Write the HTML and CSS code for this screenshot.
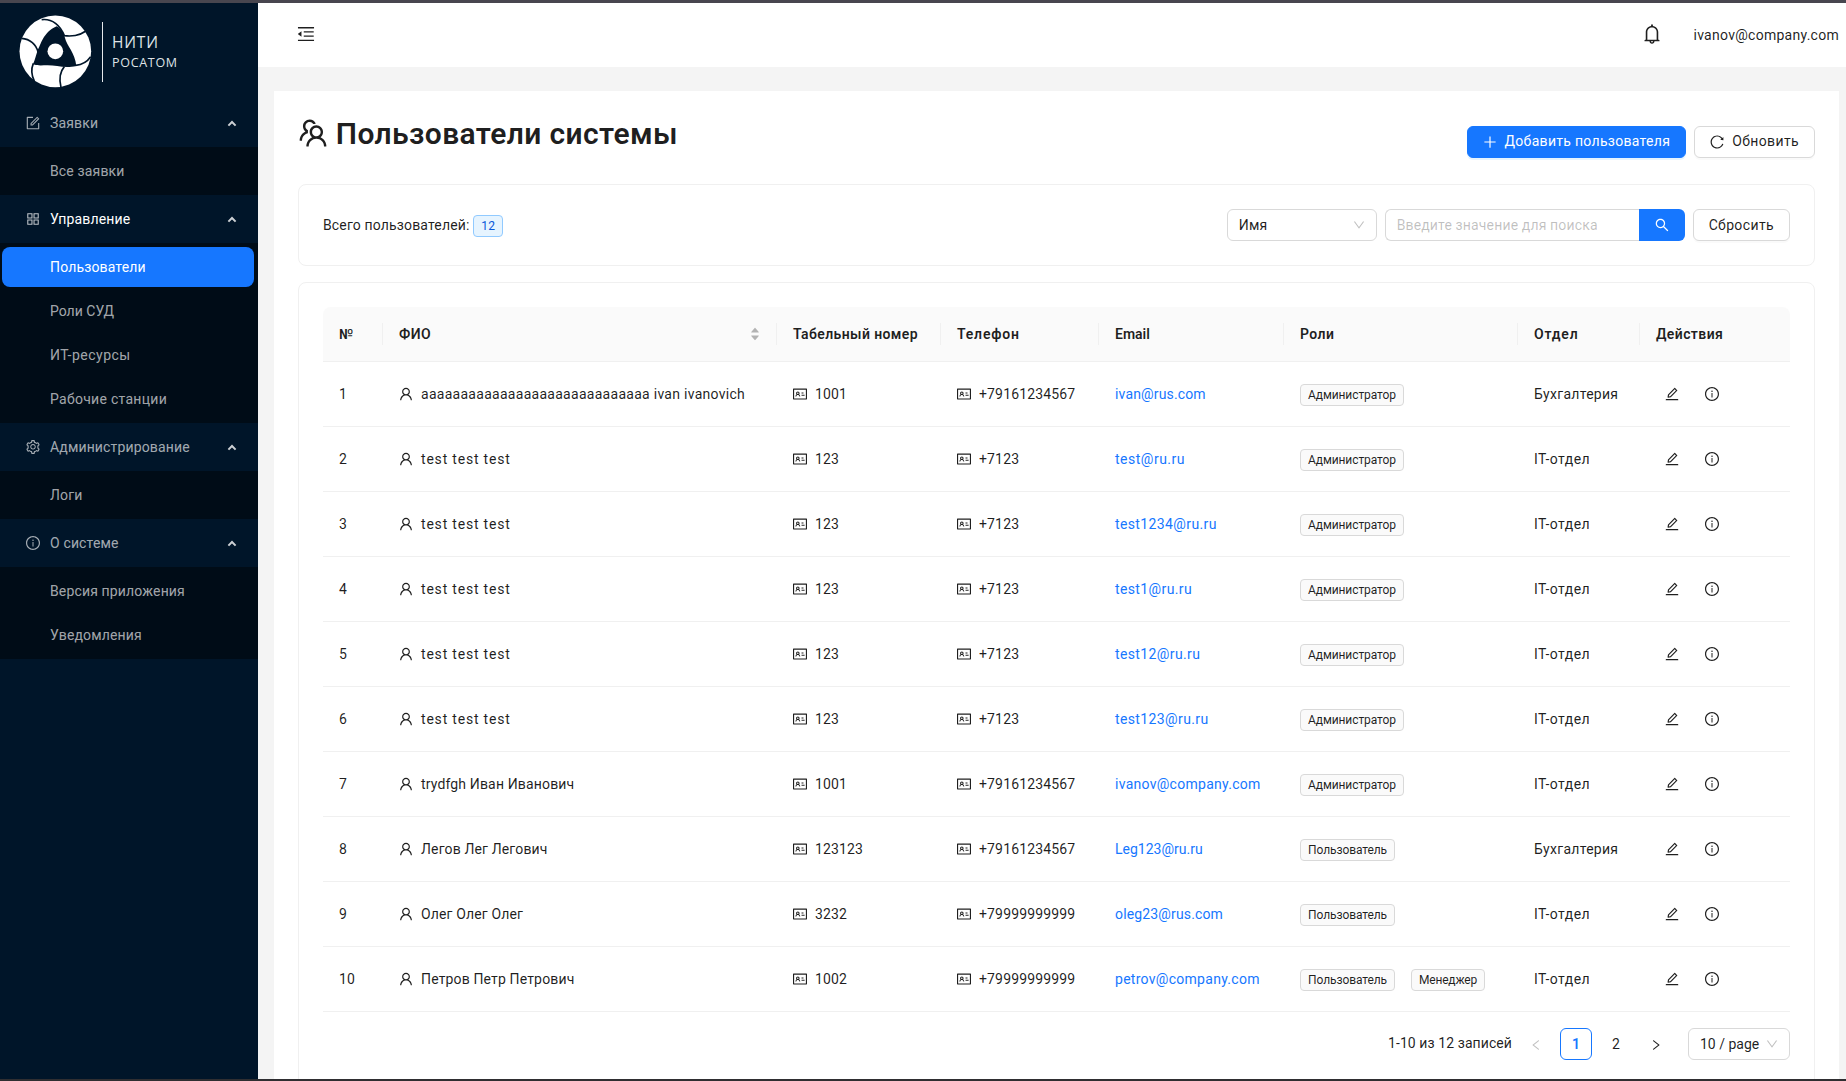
FILE: index.html
```html
<!DOCTYPE html>
<html lang="ru">
<head>
<meta charset="utf-8">
<title>Пользователи системы</title>
<link rel="stylesheet" href="styles.css">
</head>
<body>
<svg class="sprite" aria-hidden="true">
<symbol id="user" viewBox="64 64 896 896"><path d="M858.5 763.6a374 374 0 00-80.6-119.5 375.63 375.63 0 00-119.5-80.6c-.4-.2-.8-.3-1.2-.5C719.5 518 760 444.7 760 362c0-137-111-248-248-248S264 225 264 362c0 82.7 40.5 156 102.8 201.1-.4.2-.8.3-1.2.5-44.8 18.9-85 46-119.5 80.6a375.63 375.63 0 00-80.6 119.5A371.7 371.7 0 00136 901.8a8 8 0 008 8.2h60c4.4 0 7.9-3.5 8-7.8 2-77.2 33-149.5 87.8-204.3 56.7-56.7 132-87.9 212.2-87.9s155.5 31.2 212.2 87.9C779 752.7 810 825 812 902.2c.1 4.4 3.6 7.8 8 7.8h60a8 8 0 008-8.2c-1-47.8-10.9-94.3-29.5-138.2zM512 534c-45.9 0-89.1-17.9-121.6-50.4S340 407.9 340 362c0-45.9 17.9-89.1 50.4-121.6S466.1 190 512 190s89.1 17.9 121.6 50.4S684 316.1 684 362c0 45.9-17.9 89.1-50.4 121.6S557.9 534 512 534z"/></symbol>
<symbol id="edit" viewBox="64 64 896 896"><path d="M257.7 752c2 0 4-.2 6-.5L431.9 722c2-.4 3.9-1.3 5.3-2.8l423.9-423.9a9.96 9.96 0 000-14.1L694.9 114.9c-1.9-1.9-4.4-2.9-7.1-2.9s-5.2 1-7.1 2.9L256.8 538.8c-1.5 1.5-2.4 3.3-2.8 5.3l-29.5 168.2a33.5 33.5 0 009.4 29.8c6.6 6.4 14.9 9.9 23.8 9.9zm67.4-174.4L687.8 215l73.3 73.3-362.7 362.6-88.9 15.7 15.6-89zM880 836H144c-17.7 0-32 14.3-32 32v36c0 4.4 3.6 8 8 8h784c4.4 0 8-3.6 8-8v-36c0-17.7-14.3-32-32-32z"/></symbol>
<symbol id="form" viewBox="64 64 896 896"><path d="M904 512h-56c-4.4 0-8 3.6-8 8v320H184V184h320c4.4 0 8-3.6 8-8v-56c0-4.4-3.6-8-8-8H144c-17.7 0-32 14.3-32 32v736c0 17.7 14.3 32 32 32h736c17.7 0 32-14.3 32-32V520c0-4.4-3.6-8-8-8z"/><path d="M355.9 534.9L354 653.8c-.1 8.9 7.1 16.2 16 16.2h.4l118-2.9c2-.1 4-.9 5.4-2.3l415.9-415c3.1-3.1 3.1-8.2 0-11.3L785.4 114.3c-1.6-1.6-3.6-2.3-5.7-2.3s-4.1.8-5.7 2.3l-415.8 415a8.3 8.3 0 00-2.3 5.6zm63.5 23.6L779.7 199l45.2 45.1-360.5 359.7-45.7 1.1.7-46.4z"/></symbol>
<symbol id="info" viewBox="64 64 896 896"><path d="M512 64C264.6 64 64 264.6 64 512s200.6 448 448 448 448-200.6 448-448S759.4 64 512 64zm0 820c-205.4 0-372-166.6-372-372s166.6-372 372-372 372 166.6 372 372-166.6 372-372 372z"/><path d="M464 336a48 48 0 1096 0 48 48 0 10-96 0zm72 112h-48c-4.4 0-8 3.6-8 8v272c0 4.4 3.6 8 8 8h48c4.4 0 8-3.6 8-8V456c0-4.4-3.6-8-8-8z"/></symbol>
<symbol id="grid" viewBox="64 64 896 896"><path d="M464 144H160c-8.800 0-16 7.200-16 16v304c0 8.800 7.200 16 16 16h304c8.800 0 16-7.200 16-16V160c0-8.800-7.200-16-16-16zm-52 268H212V212h200v200zm452-268H560c-8.800 0-16 7.200-16 16v304c0 8.800 7.200 16 16 16h304c8.800 0 16-7.200 16-16V160c0-8.800-7.200-16-16-16zm-52 268H612V212h200v200zM464 544H160c-8.800 0-16 7.200-16 16v304c0 8.800 7.200 16 16 16h304c8.800 0 16-7.200 16-16V560c0-8.800-7.200-16-16-16zm-52 268H212V612h200v200zm452-268H560c-8.800 0-16 7.200-16 16v304c0 8.800 7.200 16 16 16h304c8.800 0 16-7.200 16-16V560c0-8.800-7.200-16-16-16zm-52 268H612V612h200v200z"/></symbol>
<symbol id="setting" viewBox="64 64 896 896"><path d="M924.8 625.7l-65.5-56c3.1-19 4.7-38.4 4.7-57.8s-1.6-38.8-4.7-57.8l65.5-56a32.03 32.03 0 009.3-35.2l-.9-2.6a443.74 443.74 0 00-79.7-137.9l-1.8-2.1a32.12 32.12 0 00-35.1-9.5l-81.3 28.9c-30-24.6-63.5-44-99.7-57.6l-15.7-85a32.05 32.05 0 00-25.8-25.7l-2.7-.5c-52.1-9.4-106.9-9.4-159 0l-2.7.5a32.05 32.05 0 00-25.8 25.7l-15.8 85.4a351.86 351.86 0 00-99 57.4l-81.9-29.1a32 32 0 00-35.1 9.5l-1.8 2.1a446.02 446.02 0 00-79.7 137.9l-.9 2.6c-4.5 12.5-.8 26.5 9.3 35.2l66.3 56.6c-3.1 18.8-4.6 38-4.6 57.1 0 19.2 1.5 38.4 4.6 57.1L99 625.5a32.03 32.03 0 00-9.3 35.2l.9 2.6c18.1 50.4 44.9 96.9 79.7 137.9l1.8 2.1a32.12 32.12 0 0035.1 9.5l81.9-29.1c29.8 24.5 63.1 43.9 99 57.4l15.8 85.4a32.05 32.05 0 0025.8 25.7l2.7.5a449.4 449.4 0 00159 0l2.7-.5a32.05 32.05 0 0025.8-25.7l15.7-85a350 350 0 0099.7-57.6l81.3 28.9a32 32 0 0035.1-9.5l1.8-2.1c34.8-41.1 61.6-87.5 79.7-137.9l.9-2.6c4.5-12.3.8-26.3-9.3-35zM788.3 465.9c2.5 15.1 3.8 30.6 3.8 46.1s-1.3 31-3.8 46.1l-6.6 40.1 74.7 63.9a370.03 370.03 0 01-42.6 73.6L721 702.8l-31.4 25.8c-23.9 19.6-50.5 35-79.3 45.8l-38.1 14.3-17.9 97a377.5 377.5 0 01-85 0l-17.9-97.2-37.8-14.5c-28.5-10.8-55-26.2-78.7-45.7l-31.4-25.9-93.4 33.2c-17-22.9-31.2-47.6-42.6-73.6l75.5-64.5-6.5-40c-2.4-14.9-3.7-30.3-3.7-45.5 0-15.3 1.2-30.6 3.7-45.5l6.5-40-75.5-64.5c11.3-26.1 25.6-50.7 42.6-73.6l93.4 33.2 31.4-25.9c23.7-19.5 50.2-34.9 78.7-45.7l37.9-14.3 17.9-97.2c28.1-3.2 56.8-3.2 85 0l17.9 97 38.1 14.3c28.7 10.8 55.4 26.2 79.3 45.8l31.4 25.8 92.8-32.9c17 22.9 31.2 47.6 42.6 73.6L781.8 426l6.5 39.9zM512 326c-97.2 0-176 78.8-176 176s78.8 176 176 176 176-78.8 176-176-78.8-176-176-176zm79.2 255.2A111.6 111.6 0 01512 614c-29.9 0-58-11.7-79.2-32.8A111.6 111.6 0 01400 502c0-29.9 11.7-58 32.8-79.2C454 401.6 482.1 390 512 390c29.9 0 58 11.6 79.2 32.8A111.6 111.6 0 01624 502c0 29.9-11.7 58-32.8 79.2z"/></symbol>
<symbol id="fold" viewBox="64 64 896 896"><path d="M408 442h480c4.4 0 8-3.6 8-8v-56c0-4.4-3.6-8-8-8H408c-4.4 0-8 3.6-8 8v56c0 4.4 3.6 8 8 8zm-8 204c0 4.4 3.6 8 8 8h480c4.4 0 8-3.6 8-8v-56c0-4.4-3.6-8-8-8H408c-4.4 0-8 3.6-8 8v56zm504-486H120c-4.4 0-8 3.6-8 8v56c0 4.4 3.6 8 8 8h784c4.4 0 8-3.6 8-8v-56c0-4.4-3.6-8-8-8zm0 632H120c-4.4 0-8 3.6-8 8v56c0 4.4 3.6 8 8 8h784c4.4 0 8-3.6 8-8v-56c0-4.4-3.6-8-8-8zM115.4 518.9L271.7 642c5.8 4.6 14.4.5 14.4-6.9V388.9c0-7.4-8.5-11.5-14.4-6.9L115.4 505.1a8.74 8.74 0 000 13.8z"/></symbol>
<symbol id="bell" viewBox="64 64 896 896"><path d="M816 768h-24V428c0-141.1-104.3-257.7-240-277.1V112c0-22.1-17.9-40-40-40s-40 17.9-40 40v38.9c-135.7 19.4-240 136-240 277.1v340h-24c-17.7 0-32 14.3-32 32v32c0 4.4 3.6 8 8 8h216c0 61.8 50.2 112 112 112s112-50.2 112-112h216c4.4 0 8-3.6 8-8v-32c0-17.7-14.3-32-32-32zM512 888c-26.5 0-48-21.5-48-48h96c0 26.5-21.5 48-48 48zM304 768V428c0-55.6 21.6-107.8 60.9-147.1S456.4 220 512 220c55.6 0 107.8 21.6 147.1 60.9S720 372.4 720 428v340H304z"/></symbol>
<symbol id="reload" viewBox="64 64 896 896"><path d="M909.1 209.3l-56.4 44.1C775.8 155.1 656.2 92 521.9 92 290 92 102.3 279.5 102 511.5 101.7 743.7 289.8 932 521.9 932c181.3 0 335.8-115 394.6-276.1 1.5-4.2-.7-8.9-4.9-10.3l-56.7-19.5a8 8 0 00-10.1 4.8c-1.8 5-3.8 10-5.9 14.9-17.3 41-42.1 77.8-73.7 109.4A344.77 344.77 0 01655.9 829c-42.3 17.9-87.4 27-133.8 27-46.5 0-91.5-9.1-133.8-27A341.5 341.5 0 01279 755.2a342.16 342.16 0 01-73.7-109.4c-17.9-42.4-27-87.4-27-133.9s9.1-91.5 27-133.9c17.3-41 42.1-77.8 73.7-109.4 31.6-31.6 68.4-56.4 109.3-73.8 42.3-17.9 87.4-27 133.8-27 46.5 0 91.5 9.1 133.8 27a341.5 341.5 0 01109.3 73.8c9.9 9.9 19.2 20.4 27.8 31.4l-60.2 47a8 8 0 003 14.1l175.6 43c5 1.2 9.9-2.6 9.9-7.7l.8-180.9c-.1-6.6-7.8-10.3-13-6.2z"/></symbol>
<symbol id="search" viewBox="64 64 896 896"><path d="M909.6 854.5L649.9 594.8C690.2 542.7 712 479 712 412c0-80.2-31.3-155.4-87.9-212.1-56.6-56.7-132-87.9-212.1-87.9s-155.5 31.3-212.1 87.9C143.2 256.5 112 331.8 112 412c0 80.1 31.3 155.5 87.9 212.1C256.5 680.8 331.8 712 412 712c67 0 130.6-21.8 182.7-62l259.7 259.6a8.2 8.2 0 0011.6 0l43.6-43.5a8.2 8.2 0 000-11.6zM570.4 570.4C528 612.7 471.8 636 412 636s-116-23.3-158.4-65.6C211.3 528 188 471.8 188 412s23.3-116.1 65.6-158.4C296 211.3 352.2 188 412 188s116.1 23.2 158.4 65.6S636 352.2 636 412s-23.3 116.1-65.6 158.4z"/></symbol>
<symbol id="down" viewBox="64 64 896 896"><path d="M884 256h-75c-5.1 0-9.9 2.5-12.9 6.6L512 654.2 227.9 262.6c-3-4.1-7.8-6.6-12.9-6.6h-75c-6.5 0-10.3 7.4-6.5 12.7l352.6 486.1c12.8 17.6 39 17.6 51.7 0l352.6-486.1c3.9-5.3.1-12.7-6.4-12.7z"/></symbol>
<symbol id="left" viewBox="64 64 896 896"><path d="M724 218.3V141c0-6.7-7.7-10.4-12.9-6.3L260.3 486.8a31.86 31.86 0 000 50.3l450.8 352.1c5.3 4.1 12.9.4 12.9-6.3v-77.3c0-4.9-2.3-9.6-6.1-12.6l-360-281 360-281.1c3.8-3 6.1-7.7 6.1-12.6z"/></symbol>
<symbol id="right" viewBox="64 64 896 896"><path d="M765.7 486.8L314.9 134.7A7.97 7.97 0 00302 141v77.3c0 4.9 2.3 9.6 6.1 12.6l360 281.1-360 281.1c-3.9 3-6.1 7.7-6.1 12.6V883c0 6.7 7.7 10.4 12.9 6.3l450.8-352.1a31.96 31.96 0 000-50.4z"/></symbol>
<symbol id="plus" viewBox="64 64 896 896"><path d="M482 152h60q8 0 8 8v704q0 8-8 8h-60q-8 0-8-8V160q0-8 8-8z"/><path d="M192 474h672q8 0 8 8v60q0 8-8 8H160q-8 0-8-8v-60q0-8 8-8z"/></symbol>
<symbol id="team" viewBox="64 64 896 896"><path d="M824.2 699.9a301.55 301.55 0 00-86.4-60.4C783.1 602.8 812 546.8 812 484c0-110.8-92.4-201.7-203.2-200-109.1 1.7-197 90.6-197 200 0 62.8 29 118.8 74.2 155.5a300.95 300.95 0 00-86.4 60.4C345 754.6 314 826.8 312 903.8a8 8 0 008 8.2h56c4.3 0 7.9-3.4 8-7.7 1.9-58 25.4-112.3 66.7-153.5A226.62 226.62 0 01612 684c60.9 0 118.2 23.7 161.3 66.8C814.6 792 838 846.3 840 904.3c.1 4.3 3.7 7.7 8 7.7h56a8 8 0 008-8.2c-2-77-33-149.2-87.8-203.9zM612 612c-34.2 0-66.4-13.3-90.5-37.5a126.86 126.86 0 01-37.5-91.8c.3-32.8 13.4-64.5 36.3-88 24-24.6 56.1-38.3 90.4-38.7 33.9-.3 66.8 12.9 91 36.6 24.8 24.3 38.4 56.8 38.4 91.4 0 34.2-13.3 66.3-37.5 90.5A127.3 127.3 0 01612 612zM361.5 510.4c-.9-8.7-1.4-17.5-1.4-26.4 0-15.9 1.5-31.4 4.3-46.5.7-3.6-1.2-7.3-4.5-8.8-13.6-6.1-26.1-14.5-36.9-25.1a127.54 127.54 0 01-38.7-95.4c.9-32.1 13.8-62.6 36.3-85.6 24.7-25.3 57.9-39.1 93.2-38.7 31.9.3 62.7 12.6 86 34.4 7.9 7.4 14.7 15.6 20.4 24.4 2 3.1 5.9 4.4 9.3 3.2 17.6-6.1 36.2-10.4 55.3-12.4 5.6-.6 8.8-6.6 6.3-11.6-32.5-64.3-98.9-108.7-175.7-109.9-110.9-1.7-203.3 89.2-203.3 199.9 0 62.8 28.9 118.8 74.2 155.5-31.8 14.7-61.1 35-86.5 60.4-54.8 54.7-85.8 126.9-87.8 204a8 8 0 008 8.2h56.1c4.3 0 7.9-3.4 8-7.7 1.9-58 25.4-112.3 66.7-153.5 29.4-29.4 65.4-49.8 104.7-59.7 3.9-1 6.5-4.7 6-8.7z"/></symbol>
<symbol id="idcard" viewBox="64 64 896 896"><path d="M928 160H96c-17.7 0-32 14.3-32 32v640c0 17.7 14.3 32 32 32h832c17.7 0 32-14.3 32-32V192c0-17.7-14.3-32-32-32zm-40 632H136V232h752v560zM610.3 476h123.4c1.3 0 2.3-3.6 2.3-8v-48c0-4.4-1-8-2.3-8H610.3c-1.3 0-2.3 3.6-2.3 8v48c0 4.4 1 8 2.3 8zm4.8 144h185.7c3.9 0 7.1-3.6 7.1-8v-48c0-4.4-3.2-8-7.1-8H615.1c-3.9 0-7.1 3.6-7.1 8v48c0 4.4 3.2 8 7.1 8zM224 673h43.9c4.2 0 7.6-3.3 7.9-7.5 3.8-50.5 46-90.5 97.2-90.5s93.4 40 97.2 90.5c.3 4.2 3.7 7.5 7.9 7.5H522a8 8 0 008-8.4c-2.8-53.3-32-99.7-74.6-126.1a111.8 111.8 0 0029.1-75.5c0-61.9-49.9-112-111.4-112s-111.4 50.1-111.4 112c0 29.1 11 55.5 29.1 75.5a158.09 158.09 0 00-74.6 126.1c-.4 4.6 3.2 8.4 7.8 8.4zm149-262c28.5 0 51.7 23.3 51.7 52s-23.2 52-51.7 52-51.7-23.3-51.7-52 23.2-52 51.7-52z"/></symbol>
<symbol id="sort" viewBox="0 0 8 14"><path d="M4.300.9 7.800 5c.2.2 0 .5-.3.5H.5C.2 5.500 0 5.200.2 5L3.700.9c.2-.2.4-.2.6 0z"/><path d="M4.300 13.100 7.800 9c.2-.2 0-.5-.3-.5H.5c-.3 0-.5.3-.3.5l3.500 4.100c.2.2.4.2.6 0z"/></symbol>
<symbol id="chevron" viewBox="0 0 10 7"><path d="M1.400 5.600 5 2l3.600 3.600" fill="none" stroke="currentColor" stroke-width="2"/></symbol>
</svg>
<div class="app">
<aside class="sidebar">
  <div class="brand">
    <svg class="brand-mark" viewBox="0 0 240 240"><circle cx="121" cy="124" r="107.500" fill="#fff"/><path class="hub" d="M125 49C139 57 146 69 150 84C155 107 180 128 184 168C150 176 125 166 98 166C80 166 68 168 54 163C61 147 63 135 68 121C78 104 83 68 125 49Z"/><g class="blade"><path d="M80 29C112 25 136 46 148 77C178 81 206 72 226 52"/><path d="M20 85C45 87 64 103 69 126"/><path d="M55 160C48 177 50 197 58 213"/><path d="M148 170C136 184 132 208 138 232"/><path d="M227 140C216 156 201 164 182 166"/></g><circle cx="121" cy="124" r="23.500" fill="#fff"/></svg>
    <div class="brand-text"><span class="brand-name">НИТИ</span><span class="brand-sub">РОСАТОМ</span></div>
  </div>
  <nav class="menu">
    <div class="menu-title"><svg class="icon"><use href="#form"/></svg><span>Заявки</span><svg class="chev"><use href="#chevron"/></svg></div>
    <div class="submenu"><a class="item">Все заявки</a></div>
    <div class="menu-title open"><svg class="icon"><use href="#grid"/></svg><span>Управление</span><svg class="chev"><use href="#chevron"/></svg></div>
    <div class="submenu"><a class="item active">Пользователи</a><a class="item tight">Роли СУД</a><a class="item wider">ИТ-ресурсы</a><a class="item wide">Рабочие станции</a></div>
    <div class="menu-title"><svg class="icon"><use href="#setting"/></svg><span>Администрирование</span><svg class="chev"><use href="#chevron"/></svg></div>
    <div class="submenu"><a class="item">Логи</a></div>
    <div class="menu-title"><svg class="icon"><use href="#info"/></svg><span>О системе</span><svg class="chev"><use href="#chevron"/></svg></div>
    <div class="submenu"><a class="item">Версия приложения</a><a class="item">Уведомления</a></div>
  </nav>
</aside>
<div class="main">
  <header class="topbar"><svg class="icon fold"><use href="#fold"/></svg><svg class="icon bell"><use href="#bell"/></svg><span class="account">ivanov@company.com</span></header>
  <main class="page">
    <div class="page-head">
      <h2 class="title"><svg class="icon title-icon"><use href="#team"/></svg> Пользователи системы</h2>
      <div class="actions"><button class="btn primary"><svg class="icon"><use href="#plus"/></svg><span>Добавить пользователя</span></button><button class="btn"><svg class="icon"><use href="#reload"/></svg><span>Обновить</span></button></div>
    </div>
    <section class="card filter">
      <div>Всего пользователей: <span class="tag count">12</span></div>
      <div class="controls"><div class="select by">Имя<svg class="icon"><use href="#down"/></svg></div><div class="search"><div class="field">Введите значение для поиска</div><button class="go"><svg class="icon"><use href="#search"/></svg></button></div><button class="btn"><span>Сбросить</span></button></div>
    </section>
    <section class="card list">
      <table class="table">
        <colgroup><col class="c-num"><col class="c-name"><col class="c-tab"><col class="c-tel"><col class="c-mail"><col class="c-role"><col class="c-dep"><col class="c-act"></colgroup>
        <thead><tr><th>№</th><th><div class="sortable">ФИО<svg class="sort"><use href="#sort"/></svg></div></th><th>Табельный номер</th><th class="widest">Телефон</th><th class="tight">Email</th><th>Роли</th><th class="widest">Отдел</th><th>Действия</th></tr></thead>
        <tbody>
        <tr><td>1</td><td class="wide"><div class="cell"><svg class="icon"><use href="#user"/></svg>aaaaaaaaaaaaaaaaaaaaaaaaaaaaa ivan ivanovich</div></td><td><div class="cell"><svg class="icon"><use href="#idcard"/></svg>1001</div></td><td><div class="cell"><svg class="icon"><use href="#idcard"/></svg>+79161234567</div></td><td><a class="mail">ivan@rus.com</a></td><td><div class="tags"><span class="tag">Администратор</span></div></td><td class="wide">Бухгалтерия</td><td><div class="ops"><svg class="icon"><use href="#edit"/></svg><svg class="icon"><use href="#info"/></svg></div></td></tr>
        <tr><td>2</td><td class="widest"><div class="cell"><svg class="icon"><use href="#user"/></svg>test test test</div></td><td><div class="cell"><svg class="icon"><use href="#idcard"/></svg>123</div></td><td><div class="cell"><svg class="icon"><use href="#idcard"/></svg>+7123</div></td><td><a class="mail wider">test@ru.ru</a></td><td><div class="tags"><span class="tag">Администратор</span></div></td><td class="wider">IT-отдел</td><td><div class="ops"><svg class="icon"><use href="#edit"/></svg><svg class="icon"><use href="#info"/></svg></div></td></tr>
        <tr><td>3</td><td class="widest"><div class="cell"><svg class="icon"><use href="#user"/></svg>test test test</div></td><td><div class="cell"><svg class="icon"><use href="#idcard"/></svg>123</div></td><td><div class="cell"><svg class="icon"><use href="#idcard"/></svg>+7123</div></td><td><a class="mail mid">test1234@ru.ru</a></td><td><div class="tags"><span class="tag">Администратор</span></div></td><td class="wider">IT-отдел</td><td><div class="ops"><svg class="icon"><use href="#edit"/></svg><svg class="icon"><use href="#info"/></svg></div></td></tr>
        <tr><td>4</td><td class="widest"><div class="cell"><svg class="icon"><use href="#user"/></svg>test test test</div></td><td><div class="cell"><svg class="icon"><use href="#idcard"/></svg>123</div></td><td><div class="cell"><svg class="icon"><use href="#idcard"/></svg>+7123</div></td><td><a class="mail mid">test1@ru.ru</a></td><td><div class="tags"><span class="tag">Администратор</span></div></td><td class="wider">IT-отдел</td><td><div class="ops"><svg class="icon"><use href="#edit"/></svg><svg class="icon"><use href="#info"/></svg></div></td></tr>
        <tr><td>5</td><td class="widest"><div class="cell"><svg class="icon"><use href="#user"/></svg>test test test</div></td><td><div class="cell"><svg class="icon"><use href="#idcard"/></svg>123</div></td><td><div class="cell"><svg class="icon"><use href="#idcard"/></svg>+7123</div></td><td><a class="mail mid">test12@ru.ru</a></td><td><div class="tags"><span class="tag">Администратор</span></div></td><td class="wider">IT-отдел</td><td><div class="ops"><svg class="icon"><use href="#edit"/></svg><svg class="icon"><use href="#info"/></svg></div></td></tr>
        <tr><td>6</td><td class="widest"><div class="cell"><svg class="icon"><use href="#user"/></svg>test test test</div></td><td><div class="cell"><svg class="icon"><use href="#idcard"/></svg>123</div></td><td><div class="cell"><svg class="icon"><use href="#idcard"/></svg>+7123</div></td><td><a class="mail mid">test123@ru.ru</a></td><td><div class="tags"><span class="tag">Администратор</span></div></td><td class="wider">IT-отдел</td><td><div class="ops"><svg class="icon"><use href="#edit"/></svg><svg class="icon"><use href="#info"/></svg></div></td></tr>
        <tr><td>7</td><td><div class="cell"><svg class="icon"><use href="#user"/></svg>trydfgh Иван Иванович</div></td><td><div class="cell"><svg class="icon"><use href="#idcard"/></svg>1001</div></td><td><div class="cell"><svg class="icon"><use href="#idcard"/></svg>+79161234567</div></td><td><a class="mail wide">ivanov@company.com</a></td><td><div class="tags"><span class="tag">Администратор</span></div></td><td class="wider">IT-отдел</td><td><div class="ops"><svg class="icon"><use href="#edit"/></svg><svg class="icon"><use href="#info"/></svg></div></td></tr>
        <tr><td>8</td><td><div class="cell"><svg class="icon"><use href="#user"/></svg>Легов Лег Легович</div></td><td><div class="cell"><svg class="icon"><use href="#idcard"/></svg>123123</div></td><td><div class="cell"><svg class="icon"><use href="#idcard"/></svg>+79161234567</div></td><td><a class="mail tight">Leg123@ru.ru</a></td><td><div class="tags"><span class="tag">Пользователь</span></div></td><td class="wide">Бухгалтерия</td><td><div class="ops"><svg class="icon"><use href="#edit"/></svg><svg class="icon"><use href="#info"/></svg></div></td></tr>
        <tr><td>9</td><td><div class="cell"><svg class="icon"><use href="#user"/></svg>Олег Олег Олег</div></td><td><div class="cell"><svg class="icon"><use href="#idcard"/></svg>3232</div></td><td><div class="cell"><svg class="icon"><use href="#idcard"/></svg>+79999999999</div></td><td><a class="mail">oleg23@rus.com</a></td><td><div class="tags"><span class="tag">Пользователь</span></div></td><td class="wider">IT-отдел</td><td><div class="ops"><svg class="icon"><use href="#edit"/></svg><svg class="icon"><use href="#info"/></svg></div></td></tr>
        <tr><td>10</td><td><div class="cell"><svg class="icon"><use href="#user"/></svg>Петров Петр Петрович</div></td><td><div class="cell"><svg class="icon"><use href="#idcard"/></svg>1002</div></td><td><div class="cell"><svg class="icon"><use href="#idcard"/></svg>+79999999999</div></td><td><a class="mail wide">petrov@company.com</a></td><td><div class="tags"><span class="tag">Пользователь</span><span class="tag narrow">Менеджер</span></div></td><td class="wider">IT-отдел</td><td><div class="ops"><svg class="icon"><use href="#edit"/></svg><svg class="icon"><use href="#info"/></svg></div></td></tr>
        </tbody>
      </table>
      <div class="pager"><span class="total">1-10 из 12 записей</span><span class="pg off"><svg class="icon"><use href="#left"/></svg></span><span class="pg current">1</span><span class="pg">2</span><span class="pg"><svg class="icon"><use href="#right"/></svg></span><div class="select size">10 / page<svg class="icon"><use href="#down"/></svg></div></div>
    </section>
  </main>
</div>
</div>
</body>
</html>
```
FILE: styles.css
```css
* { box-sizing: border-box; }
body { margin: 0; font: 14px/22px Roboto, "Noto Sans", sans-serif; letter-spacing: .15px; color: rgba(0,0,0,.88); }
.sprite { display: none; }
.app { display: flex; height: 1081px; overflow: hidden; border-top: 3px solid #48464f; border-bottom: 2px solid #2f2e31; background: #f4f4f4; }
.icon { width: 14px; height: 14px; fill: currentColor; flex: none; display: block; }

.sidebar { width: 258px; flex: none; background: #001529; color: rgba(255,255,255,.65); }
.brand { display: flex; height: 96px; padding: 7px 0 0 15px; }
.brand-mark { width: 80px; height: 80px; flex: none; }
.hub { fill: #001529; }
.blade { fill: none; stroke: #001529; stroke-width: 5; }
.brand-text { display: flex; flex-direction: column; margin: 12px 0 0 7px; padding: 9px 0 0 9px; height: 60px; border-left: 1px solid #e6e9ec; font-family: "Open Sans", sans-serif; color: #dfe3e6; }
.brand-name { font-size: 15.500px; line-height: 23px; letter-spacing: .8px; }
.brand-sub { font-size: 12.500px; line-height: 18px; letter-spacing: .7px; }
.menu-title { display: flex; align-items: center; height: 48px; padding: 0 21px 0 26px; }
.menu-title span { flex: 1; margin-left: 10px; }
.menu-title.open { color: #fff; }
.menu-title.open .icon { color: rgba(255,255,255,.75); }
.chev { width: 10px; height: 7px; margin-top: 1px; color: rgba(255,255,255,.8); }
.submenu { display: flex; flex-direction: column; gap: 4px; padding: 4px 4px 4px 2px; background: #000c17; }
.item { height: 40px; line-height: 40px; padding-left: 48px; border-radius: 8px; }
.item.active { background: #1677ff; color: #fff; }

.main { flex: 1; display: flex; flex-direction: column; }
.topbar { height: 64px; flex: none; background: #fff; display: flex; align-items: center; padding: 0 7px 2px 39px; }
.fold { width: 18px; height: 18px; }
.bell { width: 20px; height: 20px; margin-left: auto; margin-right: 32px; }
.account { padding-top: 2px; letter-spacing: .27px; }
.page { flex: 1; margin: 24px 7px 0 16px; padding: 24px 24px 0; background: #fff; }
.page-head { display: flex; justify-content: space-between; align-items: center; height: 53px; margin-bottom: 16px; }
.title { margin: 0 0 15px; font-size: 30px; line-height: 38px; font-weight: 600; letter-spacing: .38px; }
.title-icon { display: inline-block; width: 30px; height: 30px; vertical-align: -4px; }
.actions, .controls { display: flex; gap: 8px; }
.btn { display: flex; align-items: center; gap: 8px; height: 32px; padding: 0 15px; border: 1px solid #d9d9d9; border-radius: 6px; background: #fff; color: rgba(0,0,0,.88); font: inherit; letter-spacing: .38px; box-shadow: 0 2px 0 rgba(0,0,0,.02); }
.btn span { padding-bottom: 1px; }
.btn.primary { background: #1677ff; border-color: #1677ff; color: #fff; letter-spacing: .3px; box-shadow: 0 2px 0 rgba(5,145,255,.1); }
.card { border: 1px solid #f0f0f0; border-radius: 8px; padding: 24px; }
.filter { display: flex; justify-content: space-between; align-items: center; height: 82px; margin-bottom: 16px; }
.select { display: flex; align-items: center; justify-content: space-between; height: 32px; padding: 0 11px; border: 1px solid #d9d9d9; border-radius: 6px; }
.select .icon { width: 12px; height: 12px; color: rgba(0,0,0,.25); }
.by { width: 150px; letter-spacing: .3px; }
.search { display: flex; width: 300px; }
.field { flex: 1; height: 32px; line-height: 30px; padding: 0 11px; border: 1px solid #d9d9d9; border-right: 0; border-radius: 6px 0 0 6px; color: rgba(0,0,0,.25); }
.go { width: 46px; height: 32px; padding: 0 16px; border: 0; border-radius: 0 6px 6px 0; background: #1677ff; color: #fff; }
.tag { display: inline-block; height: 22px; padding: 0 7px; border: 1px solid #d9d9d9; border-radius: 4px; background: #fafafa; font-size: 12px; line-height: 20px; letter-spacing: -.09px; white-space: nowrap; }
.tag.narrow { letter-spacing: -.2px; }
.tag.count { background: #e6f4ff; border-color: #91caff; color: #0958d9; letter-spacing: .3px; }

.list { height: 900px; }
.table { table-layout: fixed; width: 1467px; border-collapse: separate; border-spacing: 0; }
.c-num { width: 60px; } .c-name { width: 394px; } .c-tab { width: 164px; } .c-tel { width: 158px; }
.c-mail { width: 185px; } .c-role { width: 234px; } .c-dep { width: 122px; } .c-act { width: 150px; }
th { height: 55px; padding: 0 16px; text-align: left; font-weight: 600; letter-spacing: .4px; border-bottom: 1px solid #f0f0f0; background: linear-gradient(#f0f0f0,#f0f0f0) right 16px / 1px 22px no-repeat #fafafa; }
th:first-child { border-top-left-radius: 8px; letter-spacing: 0; }
th:last-child { border-top-right-radius: 8px; background: #fafafa; }
td { height: 65px; padding: 0 16px; border-bottom: 1px solid #f0f0f0; white-space: nowrap; }
.sortable { display: flex; justify-content: space-between; align-items: center; }
.sort { width: 8px; height: 14px; margin-right: 2px; fill: #b2b2b2; }
.cell { display: flex; align-items: center; gap: 8px; }
.mail { color: #1677ff; }
.tags { display: flex; gap: 16px; padding-top: 2px; }
.ops { display: flex; gap: 26px; padding-left: 9px; }
.pager { display: flex; align-items: center; justify-content: flex-end; gap: 8px; margin-top: 16px; }
.pg { display: flex; align-items: center; justify-content: center; width: 32px; height: 32px; border-radius: 6px; }
.pg .icon { width: 12px; height: 12px; margin-top: 2px; }
.off { color: rgba(0,0,0,.25); }
.current { border: 1px solid #1677ff; color: #1677ff; font-weight: 600; }
.size { width: 102px; margin-left: 8px; letter-spacing: 0; }
.total { padding-bottom: 2px; letter-spacing: .08px; }

.tight { letter-spacing: 0; }
.wide { letter-spacing: .28px; }
.mid { letter-spacing: .38px; }
.wider { letter-spacing: .5px; }
.widest { letter-spacing: .8px; }
```
